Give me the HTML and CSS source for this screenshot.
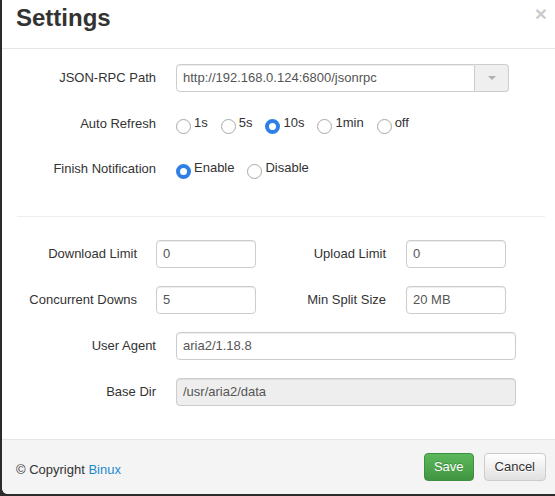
FILE: index.html
```html
<!DOCTYPE html>
<html>
<head>
<meta charset="utf-8">
<link rel="stylesheet" href="styles.css">
</head>
<body>
<div class="modal">
  <div class="modal-header">
    <h3 class="title">Settings</h3>
    <span class="close">&times;</span>
  </div>
  <div class="modal-body">
    <div class="row">
      <label class="lbl">JSON-RPC Path</label>
      <div class="input-group">
        <input class="field grouped" type="text" value="http://192.168.0.124:6800/jsonrpc">
        <span class="addon"><span class="caret"></span></span>
      </div>
    </div>
    <div class="row tight">
      <label class="lbl">Auto Refresh</label>
      <div class="radios">
        <label class="opt"><input type="radio" name="r"><span>1s</span></label>
        <label class="opt"><input type="radio" name="r"><span>5s</span></label>
        <label class="opt"><input type="radio" name="r" checked><span>10s</span></label>
        <label class="opt"><input type="radio" name="r"><span>1min</span></label>
        <label class="opt"><input type="radio" name="r"><span>off</span></label>
      </div>
    </div>
    <div class="row">
      <label class="lbl">Finish Notification</label>
      <div class="radios">
        <label class="opt"><input type="radio" name="n" checked><span>Enable</span></label>
        <label class="opt"><input type="radio" name="n"><span>Disable</span></label>
      </div>
    </div>
    <hr class="divider">
    <div class="row split">
      <label class="lbl">Download Limit</label>
      <input class="field" type="text" value="0">
      <label class="lbl lbl-r">Upload Limit</label>
      <input class="field" type="text" value="0">
    </div>
    <div class="row split">
      <label class="lbl">Concurrent Downs</label>
      <input class="field" type="text" value="5">
      <label class="lbl lbl-r">Min Split Size</label>
      <input class="field" type="text" value="20 MB">
    </div>
    <div class="row">
      <label class="lbl">User Agent</label>
      <input class="field wide" type="text" value="aria2/1.18.8">
    </div>
    <div class="row">
      <label class="lbl">Base Dir</label>
      <input class="field wide" type="text" value="/usr/aria2/data" disabled>
    </div>
  </div>
  <div class="modal-footer">
    <div class="copy">&copy; Copyright <a href="#" class="link">Binux</a></div>
    <div class="buttons">
      <button class="btn btn-save">Save</button>
      <button class="btn btn-cancel">Cancel</button>
    </div>
  </div>
</div>
</body>
</html>
```
FILE: styles.css
```css
html, body {
  margin: 0;
  padding: 0;
  width: 555px;
  height: 496px;
  overflow: hidden;
  background: #2b2b2b;
}
body {
  font-family: "Liberation Sans", Arial, sans-serif;
  font-size: 13px;
  color: #333;
}
.modal {
  margin-left: 2px;
  width: 558px;
  height: 494px;
  background: #fff;
  border-radius: 0 0 6px 6px;
  overflow: hidden;
  display: flex;
  flex-direction: column;
}
.modal-header {
  height: 48px;
  flex: none;
  border-bottom: 1px solid #e5e5e5;
  padding: 0 15px 0 15px;
  display: flex;
  justify-content: space-between;
  align-items: flex-start;
}
.title {
  margin: 5px 0 0 -1px;
  font-size: 24px;
  font-weight: bold;
  line-height: 26px;
  color: #333;
}
.close {
  margin-top: 3px;
  margin-right: -2px;
  font-size: 21px;
  font-weight: bold;
  line-height: 21px;
  color: #000;
  opacity: 0.2;
}
.modal-body {
  padding: 15px 15px 14px;
  flex: 1;
}
.row {
  display: grid;
  grid-template-columns: 159px auto;
  align-items: center;
  height: 28px;
  margin-bottom: 18px;
}
.row.tight {
  margin-bottom: 17px;
}
.row.split {
  grid-template-columns: 139px 100px 150px 100px;
}
.lbl {
  text-align: right;
  padding-right: 20px;
  padding-bottom: 1px;
  color: #333;
  white-space: nowrap;
}
.split .lbl {
  padding-right: 19px;
}
.split .lbl-r {
  padding-right: 20px;
}
.field {
  box-sizing: border-box;
  height: 28px;
  width: 100px;
  margin: 0;
  padding: 0 6px 1px;
  font-family: "Liberation Sans", Arial, sans-serif;
  font-size: 13px;
  color: #555;
  background: #fff;
  border: 1px solid #ccc;
  border-radius: 4px;
  box-shadow: inset 0 1px 1px rgba(0,0,0,0.075);
  outline: none;
}
.field.wide {
  width: 340px;
}
.field:disabled {
  background: #eee;
  color: #555;
}
.input-group {
  display: flex;
  width: 333px;
  height: 28px;
}
.field.grouped {
  flex: 1;
  width: auto;
  border-radius: 4px 0 0 4px;
}
.addon {
  box-sizing: border-box;
  width: 34px;
  height: 28px;
  border: 1px solid #ccc;
  border-left: 0;
  border-radius: 0 4px 4px 0;
  background: #efefef;
  display: flex;
  align-items: center;
  justify-content: center;
}
.caret {
  width: 0;
  height: 0;
  border-left: 4px solid transparent;
  border-right: 4px solid transparent;
  border-top: 4px solid #b0b0b0;
}
.radios {
  display: flex;
  align-items: center;
}
.opt {
  display: inline-flex;
  align-items: center;
  margin-right: 13px;
  color: #333;
}
.opt input {
  appearance: none;
  -webkit-appearance: none;
  box-sizing: border-box;
  width: 15px;
  height: 15px;
  margin: 5px 3px 0 0;
  border: 1px solid #a8a8a8;
  border-radius: 50%;
  background: #fff;
}
.opt input:checked {
  border: 4px solid #2f80e6;
}
.opt span {
  line-height: 20px;
  padding-bottom: 3px;
}
.divider {
  margin: 33px 0 23px;
  border: 0;
  border-top: 1px solid #eee;
  height: 0;
}
.modal-footer {
  height: 55px;
  flex: none;
  box-sizing: border-box;
  border-top: 1px solid #e5e5e5;
  background: #f4f4f4;
  padding: 0 14px 0 14px;
  display: flex;
  justify-content: space-between;
  align-items: center;
}
.copy {
  margin-top: 4px;
  color: #333;
}
.link {
  color: #1d8ad0;
  text-decoration: none;
}
.buttons {
  display: flex;
  gap: 10px;
}
.btn {
  box-sizing: border-box;
  height: 28px;
  padding: 0 10px 1px;
  font-family: "Liberation Sans", Arial, sans-serif;
  font-size: 13px;
  border-radius: 4px;
  border: 1px solid #ccc;
  cursor: pointer;
}
.btn-save {
  padding: 0 9px 1px;
  color: #fff;
  background: linear-gradient(#5cb85c, #419641);
  border-color: #3e8f3e;
  text-shadow: 0 -1px 0 rgba(0,0,0,0.2);
}
.btn-cancel {
  color: #333;
  background: linear-gradient(#fff, #e0e0e0);
  border-color: #ccc;
  text-shadow: 0 1px 0 #fff;
}
```
